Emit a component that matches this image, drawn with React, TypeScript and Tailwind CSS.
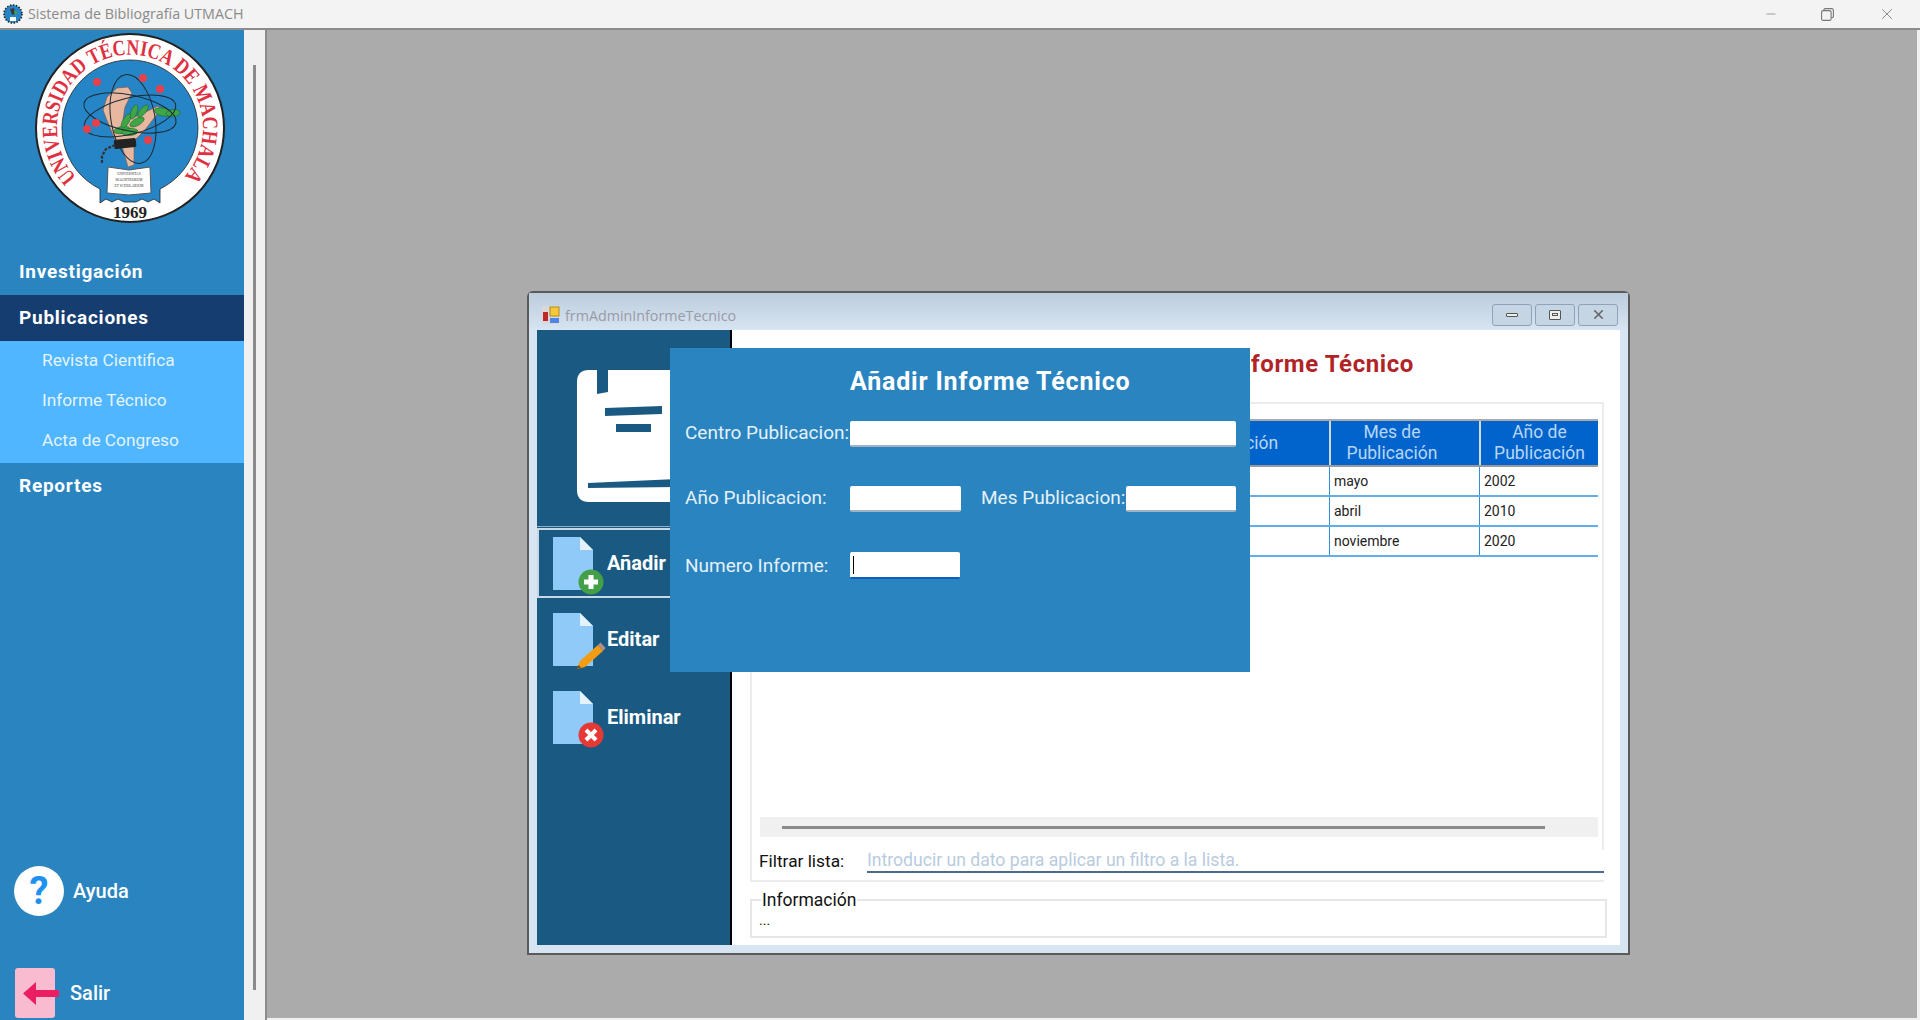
import { Minus, X } from 'lucide-react'

const FONT = "font-['Roboto','Liberation_Sans',sans-serif]"

const rows = [
  { mes: 'mayo', anio: '2002' },
  { mes: 'abril', anio: '2010' },
  { mes: 'noviembre', anio: '2020' },
]

function MiniLogo() {
  return (
    <svg width="20" height="20" viewBox="0 0 20 20">
      <circle cx="10" cy="10" r="9" fill="#2585c6" stroke="#222" strokeWidth="1.6" strokeDasharray="1.5 1.5" />
      <path d="M7 5 L11 4 L12 10 L9 11 Z" fill="#3a3a3a" />
      <path d="M11 7 L15 8 L12 11 Z" fill="#3fa648" />
      <rect x="7" y="13" width="6" height="4" fill="#fff" />
    </svg>
  )
}

function Logo() {
  return (
    <svg width="200" height="200" viewBox="0 0 200 200" className="overflow-visible">
      <circle cx="100" cy="100" r="94" fill="#fff" stroke="#222" strokeWidth="2" />
      <path
        d="M70 161 A68 68 0 1 1 130 161 L130 175 L124 171 L118 174 L112 171 L106 174 L94 174 L88 171 L82 174 L76 171 L70 175 Z"
        fill="#2585c6"
        stroke="#222"
        strokeWidth="0.8"
      />
      <defs>
        <path id="logo-arc" d="M46.7 149.6 A73 73 0 1 1 153.3 149.6" />
      </defs>
      <text fill="#e0303f" fontFamily="'Liberation Serif',serif" fontWeight="700" fontSize="22">
        <textPath href="#logo-arc" textLength="337" lengthAdjust="spacingAndGlyphs">
          UNIVERSIDAD TÉCNICA DE MACHALA
        </textPath>
      </text>
      <text x="100" y="190" textAnchor="middle" fill="#222" fontFamily="'Liberation Serif',serif" fontWeight="700" fontSize="17">
        1969
      </text>
      {/* brazo y puño */}
      <path d="M92 118 L98 139 L104 137 L104 116 Z" fill="#e8b7a0" stroke="#7b5a4c" strokeWidth="0.6" />
      <path
        d="M85 112 L76 90 L73 82 L77 69 L87 60 L98 59 L102 65 L95 79 L93 92 L105 89 L128 78 L131 81 L115 102 L105 112 Z"
        fill="#e8b7a0"
        stroke="#7b5a4c"
        strokeWidth="0.7"
      />
      <g fill="#3fa648" stroke="#1f6b2a" strokeWidth="0.6">
        <ellipse cx="92" cy="102" rx="8" ry="3.5" transform="rotate(-10 92 102)" />
        <ellipse cx="100" cy="104" rx="8" ry="3.5" transform="rotate(-5 100 104)" />
        <ellipse cx="96" cy="93" rx="8" ry="3.2" transform="rotate(-60 96 93)" />
        <ellipse cx="107" cy="94" rx="8" ry="3.5" transform="rotate(-30 107 94)" />
        <ellipse cx="104" cy="84" rx="7.5" ry="3" transform="rotate(-70 104 84)" />
        <ellipse cx="113" cy="83" rx="7.5" ry="3" transform="rotate(-50 113 83)" />
        <ellipse cx="133" cy="84" rx="9" ry="4" transform="rotate(10 133 84)" />
        <ellipse cx="143" cy="85" rx="7" ry="3.5" transform="rotate(-5 143 85)" />
      </g>
      <rect x="84" y="111" width="22" height="9" rx="1.5" fill="#222" transform="rotate(-6 95 115)" />
      <path d="M85 117 L76 121 L72 128 L72 136" fill="none" stroke="#333" strokeWidth="2.2" strokeDasharray="3 1.4" />
      {/* orbitas */}
      <g fill="none" stroke="#1c2a33" strokeWidth="1">
        <ellipse cx="100" cy="85" rx="47" ry="18" transform="rotate(12 100 85)" />
        <ellipse cx="100" cy="88" rx="47" ry="18" transform="rotate(-14 100 88)" />
        <ellipse cx="103" cy="91" rx="22" ry="45" transform="rotate(-10 103 91)" />
      </g>
      <g fill="#e8404a">
        <circle cx="67" cy="54" r="4" />
        <circle cx="113" cy="50" r="4" />
        <circle cx="130" cy="61" r="4" />
        <circle cx="57" cy="101" r="4" />
        <circle cx="66" cy="95" r="4" />
        <circle cx="118" cy="112" r="4" />
      </g>
      {/* libro */}
      <path d="M78 139 L99 142 L120 139 L121 165 L99 167 L77 165 Z" fill="#fff" stroke="#555" strokeWidth="1" />
      <g fill="#333" fontFamily="'Liberation Serif',serif" fontSize="3.6" textAnchor="middle">
        <text x="99" y="147">UNIVERSITAS</text>
        <text x="99" y="153">MAGISTRORUM</text>
        <text x="99" y="159">ET SCHOLARIUM</text>
      </g>
    </svg>
  )
}

function FileIcon({ badge }: { badge: 'add' | 'edit' | 'delete' }) {
  return (
    <svg width="50" height="58" viewBox="0 0 50 58" className="mt-[6px] shrink-0 overflow-visible">
      <path d="M0 0 H27 L40 13 V53 H0 Z" fill="#90caf9" />
      <path d="M27 0 L40 13 H27 Z" fill="#e3f2fd" />
      {badge === 'add' && (
        <g>
          <circle cx="38" cy="45" r="12.5" fill="#43a047" />
          <path d="M35.5 38 H40.5 V42.5 H45 V47.5 H40.5 V52 H35.5 V47.5 H31 V42.5 H35.5 Z" fill="#fff" />
        </g>
      )}
      {badge === 'edit' && (
        <g>
          <path d="M24 56 L27 48 L45 32 L50 38 L32 54 Z" fill="#f39c12" />
          <path d="M24 56 L25.5 52 L28 54.5 Z" fill="#6b4a1e" />
          <path d="M45 32 L47.5 29.5 L52.5 35 L50 38 Z" fill="#b0908c" />
        </g>
      )}
      {badge === 'delete' && (
        <g>
          <circle cx="38" cy="44" r="12.5" fill="#e53935" />
          <path d="M33 39 L43 49 M43 39 L33 49" stroke="#fff" strokeWidth="4" />
        </g>
      )}
    </svg>
  )
}

function DocIcon() {
  return (
    <svg width="120" height="132" viewBox="0 0 120 132" className="shrink-0">
      <path d="M12 0 H20 V24 L31 22 V0 H120 V132 H12 Q0 132 0 120 V12 Q0 0 12 0 Z" fill="#fff" />
      <path d="M28 38 L85 36 V44 L28 46 Z" fill="#1a5a82" />
      <path d="M39 54 H74 V62 H39 Z" fill="#1a5a82" />
      <path d="M11 113 L100 109 V117 L11 118 Z" fill="#1a5a82" />
    </svg>
  )
}

function SideItem({ label, active }: { label: string; active?: boolean }) {
  return (
    <div
      className={`flex h-[46px] items-center pl-[19px] text-[19px] font-bold tracking-[0.75px] text-white ${
        active ? 'bg-[#163d6f]' : ''
      }`}
    >
      {label}
    </div>
  )
}

function WinButton({ children }: { children: React.ReactNode }) {
  return (
    <div className="flex h-[22px] w-[40px] items-center justify-center rounded-[3px] border border-[#8fa3b8] bg-[#c6d5e4]">
      {children}
    </div>
  )
}

export default function App() {
  return (
    <div className={`flex h-[1020px] w-[1920px] flex-col overflow-hidden bg-[#f0f0f0] ${FONT}`}>
      {/* barra de titulo */}
      <div className="flex h-[30px] shrink-0 items-center border-b-2 border-[#8c8c8c] bg-[#f3f3f3]">
        <div className="ml-[3px] w-[20px]">
          <MiniLogo />
        </div>
        <span className="ml-[5px] font-['Open_Sans',sans-serif] text-[14.3px] text-[#8a8a8a]">Sistema de Bibliografía UTMACH</span>
        <div className="ml-auto flex items-center text-[#777]">
          <Minus size={14} strokeWidth={1.2} className="mr-[43px]" />
          <svg width="13" height="13" viewBox="0 0 13 13" fill="none" stroke="#777" strokeWidth="1.1" className="mr-[44px]">
            <rect x="0.6" y="2.6" width="9.5" height="9.8" rx="1.5" />
            <path d="M3 2.5 V1.8 Q3 0.6 4.2 0.6 H10.5 Q12.4 0.6 12.4 2.5 V8.5 Q12.4 9.8 10.2 9.8" />
          </svg>
          <X size={18} strokeWidth={1.1} className="mr-[24px]" />
        </div>
      </div>

      <div className="flex min-h-0 flex-1">
        {/* menu lateral */}
        <aside className="flex w-[244px] shrink-0 flex-col bg-[#2a84bf]">
          <div className="h-[222px] pl-[30px]">
            <div className="-mt-[2px]">
              <Logo />
            </div>
          </div>
          <div className="-mb-[3px] flex h-[46px] -translate-y-[3px] items-center pl-[19px] text-[19px] font-bold tracking-[0.75px] text-white">
            Investigación
          </div>
          <SideItem label="Publicaciones" active />
          <div className="flex h-[122px] flex-col justify-center bg-[#4fb6ff] pb-[2px] pl-[42px] text-[17.3px] text-[#e4f3ff]">
            <div className="flex h-[40px] items-center">Revista Cientifica</div>
            <div className="flex h-[40px] items-center">Informe Técnico</div>
            <div className="flex h-[40px] items-center">Acta de Congreso</div>
          </div>
          <SideItem label="Reportes" />
          <div className="flex-1" />
          <div className="flex items-center pl-[14px]">
            <div className="flex h-[50px] w-[50px] items-center justify-center rounded-full bg-white text-[38px] font-bold leading-none text-[#1e90f0]">
              ?
            </div>
            <span className="ml-[9px] text-[20px] font-medium text-white">Ayuda</span>
          </div>
          <div className="mt-[52px] flex items-center pb-[2px] pl-[15px]">
            <div className="relative h-[50px] w-[40px] rounded-[3px] bg-[#f8bbd0]">
              <svg width="36" height="24" viewBox="0 0 36 24" className="absolute left-[8px] top-[14px]">
                <path d="M0 11.5 L13 0 V8 H36 V15 H13 V23 Z" fill="#ec1e63" />
              </svg>
            </div>
            <span className="ml-[15px] text-[20px] font-medium text-white">Salir</span>
          </div>
        </aside>

        {/* barra de desplazamiento */}
        <div className="flex w-[23px] shrink-0 justify-center border-r-2 border-[#8c8c8c] bg-[#f0f0f0] pt-[35px] pb-[30px]">
          <div className="h-full w-[3px] bg-[#8a8a8a]" />
        </div>

        {/* area MDI */}
        <main className="relative mb-[2px] mr-[3px] flex-1 bg-[#ababab]">
          <div className="absolute left-[260px] top-[261px] flex h-[664px] w-[1103px] flex-col rounded-t-[6px] border-2 border-[#5a5a5a] bg-[#d7e4f2]">
            <div className="flex h-[37px] shrink-0 items-center bg-gradient-to-b from-[#bccddd] to-[#d7e4f2] pl-[13px] pr-[10px] pt-[6px]">
              <svg width="18" height="18" viewBox="0 0 18 18">
                <rect x="0" y="0" width="18" height="18" fill="#d9d9d9" />
                <rect x="8" y="1" width="9" height="9" fill="#f7c83a" stroke="#b08a20" />
                <rect x="1" y="6" width="5" height="9" fill="#c0272d" />
                <rect x="8" y="12" width="9" height="5" fill="#4a86e8" />
              </svg>
              <span className="ml-[5px] pt-[2px] font-['Open_Sans',sans-serif] text-[14.3px] text-[#9a9aa4]">frmAdminInformeTecnico</span>
              <div className="ml-auto flex gap-[3px]">
                <WinButton>
                  <div className="h-[4px] w-[12px] rounded-[1px] border border-[#555] bg-[#eee]" />
                </WinButton>
                <WinButton>
                  <div className="flex h-[10px] w-[12px] items-center justify-center rounded-[1px] border border-[#555] bg-[#eee]">
                    <div className="h-[3px] w-[6px] border border-[#555]" />
                  </div>
                </WinButton>
                <WinButton>
                  <X size={15} strokeWidth={2.5} className="text-[#666]" />
                </WinButton>
              </div>
            </div>

            <div className="relative mx-[8px] flex min-h-0 flex-1 bg-white">
              {/* panel izquierdo */}
              <div className="flex w-[195px] shrink-0 flex-col border-r-2 border-black bg-[#1a5a82] text-[20px] font-bold text-white">
                <div className="h-[197px] overflow-hidden border-b border-[#8fb0c6] pl-[40px] pt-[40px]">
                  <DocIcon />
                </div>
                <div className="mt-[1px] flex h-[70px] items-center gap-[4px] border-y-2 border-l-2 border-[#c8d8e4] pl-[14px]">
                  <FileIcon badge="add" />
                  Añadir
                </div>
                <div className="mt-[2px] flex h-[78px] items-center gap-[4px] pl-[16px]">
                  <FileIcon badge="edit" />
                  Editar
                </div>
                <div className="flex h-[78px] items-center gap-[4px] pl-[16px]">
                  <FileIcon badge="delete" />
                  Eliminar
                </div>
              </div>

              {/* contenido */}
              <div className="flex min-w-0 flex-1 flex-col">
                <div className="flex h-[72px] shrink-0 items-center justify-end pb-[4px] pr-[206px] text-[24px] font-bold tracking-[0.6px] text-[#b02428]">
                  Administrar Informe Técnico
                </div>
                <div className="ml-[18px] mr-[16px] h-[480px] border-y-2 border-l-2 border-[#ececec]">
                  <div className="flex h-[446px] flex-col border-r-2 border-[#ececec] pl-[8px] pr-[4px] pt-[15px]">
                    <div className="border-t-2 border-[#aaa]">
                      <div className="grid h-[46px] grid-cols-[297px_272px_150px_119px] items-center border-b-2 border-[#9a9a9a] bg-[#0064cc] text-center text-[17.5px] leading-[21px] text-[#b9d6f5]">
                        <div />
                        <div>Centro de Publicación</div>
                        <div className="flex h-full items-center justify-center border-l-2 border-[#d0d8e0] pr-[26px]">
                          Mes de
                          <br />
                          Publicación
                        </div>
                        <div className="flex h-full items-center justify-center border-l-2 border-[#d0d8e0]">
                          Año de
                          <br />
                          Publicación
                        </div>
                      </div>
                      {rows.map(r => (
                        <div key={r.anio} className="grid h-[30px] grid-cols-[297px_272px_150px_119px] items-center border-b-2 border-[#63ade9] text-[14px] text-[#222]">
                          <div />
                          <div />
                          <div className="flex h-full items-center border-l border-[#2f8fdc] pl-[4px]">{r.mes}</div>
                          <div className="flex h-full items-center border-l border-[#2f8fdc] pl-[4px]">{r.anio}</div>
                        </div>
                      ))}
                    </div>
                    <div className="flex-1" />
                    <div className="mb-[13px] flex h-[20px] items-center bg-[#f0f0f0] pl-[22px]">
                      <div className="h-[3px] w-[763px] bg-[#8a8a8a]" />
                    </div>
                  </div>
                  <div className="flex h-[30px] items-start pl-[7px]">
                    <span className="w-[108px] text-[17.3px] leading-[22px] text-[#111]">Filtrar lista:</span>
                    <div className="flex h-[23px] flex-1 items-center border-b-2 border-[#4a6a90] text-[17.6px] text-[#b8cbe0]">
                      Introducir un dato para aplicar un filtro a la lista.
                    </div>
                  </div>
                </div>
                <fieldset className="ml-[18px] mr-[13px] mt-[8px] h-[48px] border-2 border-[#e6e6e6] text-[#222]">
                  <legend className="ml-[9px] px-[1px] text-[17.5px] leading-[20px] text-[#111]">Información</legend>
                  <div className="mt-[2px] pl-[7px] text-[14px] leading-[16px]">...</div>
                </fieldset>
              </div>

              {/* dialogo */}
              <div className="absolute left-[133px] top-[18px] h-[324px] w-[580px] bg-[#2a84bf] text-[19px] text-[#e4f1fa]">
                <div className="mt-[20px] h-[28px] pl-[180px] text-[25px] font-bold leading-[28px] tracking-[0.8px] text-white">
                  Añadir Informe Técnico
                </div>
                <div className="mt-[25px] flex h-[26px] items-center pl-[15px]">
                  <span className="w-[165px] whitespace-nowrap pb-[2px]">Centro Publicacion:</span>
                  <input readOnly className="h-full w-[386px] rounded-[2px] border-b-2 border-[#9fb4c4] bg-white" />
                </div>
                <div className="mt-[39px] flex h-[26px] items-center pl-[15px]">
                  <span className="w-[165px] whitespace-nowrap pb-[2px]">Año Publicacion:</span>
                  <input readOnly className="h-full w-[111px] rounded-[2px] border-b-2 border-[#9fb4c4] bg-white" />
                  <span className="ml-[20px] w-[145px] whitespace-nowrap pb-[2px]">Mes Publicacion:</span>
                  <input readOnly className="h-full w-[110px] rounded-[2px] border-b-2 border-[#9fb4c4] bg-white" />
                </div>
                <div className="mt-[40px] flex h-[27px] items-center pl-[15px]">
                  <span className="w-[165px] whitespace-nowrap pt-[2px]">Numero Informe:</span>
                  <div className="flex h-full w-[110px] items-center rounded-[2px] border-b-2 border-[#0a5fc0] bg-white pl-[3px]">
                    <div className="h-[18px] w-[1px] bg-black" />
                  </div>
                </div>
              </div>
            </div>
            <div className="h-[8px] shrink-0" />
          </div>
        </main>
      </div>
    </div>
  )
}
